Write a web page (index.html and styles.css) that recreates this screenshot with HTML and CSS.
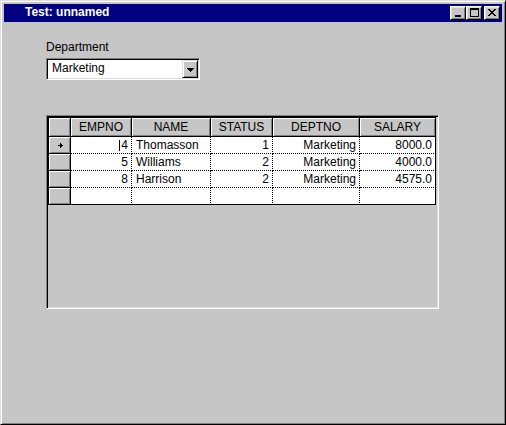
FILE: index.html
```html
<!DOCTYPE html>
<html>
<head>
<meta charset="utf-8">
<title>Test: unnamed</title>
<link rel="stylesheet" href="styles.css">
</head>
<body>
<div class="window">
  <div class="titlebar">
    <span class="title">Test: unnamed</span>
    <div class="caption-buttons">
      <span class="cap-btn cap-min"><svg width="6" height="2" viewBox="0 0 6 2" shape-rendering="crispEdges"><rect x="0" y="0" width="6" height="2" fill="#000"/></svg></span>
      <span class="cap-btn cap-max"><svg width="9" height="9" viewBox="0 0 9 9" shape-rendering="crispEdges"><rect x="0" y="0" width="9" height="2" fill="#000"/><rect x="0" y="0" width="1" height="9" fill="#000"/><rect x="8" y="0" width="1" height="9" fill="#000"/><rect x="0" y="8" width="9" height="1" fill="#000"/></svg></span>
      <span class="cap-btn cap-close"><svg width="8" height="7" viewBox="0 0 8 7" shape-rendering="crispEdges"><g fill="#000"><rect x="0" y="0" width="2" height="1"/><rect x="6" y="0" width="2" height="1"/><rect x="1" y="1" width="2" height="1"/><rect x="5" y="1" width="2" height="1"/><rect x="2" y="2" width="4" height="1"/><rect x="3" y="3" width="2" height="1"/><rect x="2" y="4" width="4" height="1"/><rect x="1" y="5" width="2" height="1"/><rect x="5" y="5" width="2" height="1"/><rect x="0" y="6" width="2" height="1"/><rect x="6" y="6" width="2" height="1"/></g></svg></span>
    </div>
  </div>
  <div class="client">
    <div class="field-label">Department</div>
    <div class="combo">
      <span class="combo-text">Marketing</span>
      <span class="combo-btn"><svg width="7" height="4" viewBox="0 0 7 4" shape-rendering="crispEdges"><g fill="#000"><rect x="0" y="0" width="7" height="1"/><rect x="1" y="1" width="5" height="1"/><rect x="2" y="2" width="3" height="1"/><rect x="3" y="3" width="1" height="1"/></g></svg></span>
    </div>
    <div class="grid-box">
      <div class="grid">
        <div class="hd"></div>
        <div class="hd">EMPNO</div>
        <div class="hd">NAME</div>
        <div class="hd">STATUS</div>
        <div class="hd">DEPTNO</div>
        <div class="hd">SALARY</div>

        <div class="ind"><svg width="5" height="5" viewBox="0 0 5 5" shape-rendering="crispEdges"><g fill="#000"><rect x="2" y="0" width="1" height="1"/><rect x="2" y="1" width="2" height="1"/><rect x="0" y="2" width="5" height="1"/><rect x="2" y="3" width="2" height="1"/><rect x="2" y="4" width="1" height="1"/></g></svg></div>
        <div class="cell num"><span class="caret"></span>4</div>
        <div class="cell">Thomasson</div>
        <div class="cell num">1</div>
        <div class="cell num">Marketing</div>
        <div class="cell num last-col">8000.0</div>

        <div class="ind"></div>
        <div class="cell num">5</div>
        <div class="cell">Williams</div>
        <div class="cell num">2</div>
        <div class="cell num">Marketing</div>
        <div class="cell num last-col">4000.0</div>

        <div class="ind"></div>
        <div class="cell num">8</div>
        <div class="cell">Harrison</div>
        <div class="cell num">2</div>
        <div class="cell num">Marketing</div>
        <div class="cell num last-col">4575.0</div>

        <div class="ind"></div>
        <div class="cell last-row"></div>
        <div class="cell last-row"></div>
        <div class="cell last-row"></div>
        <div class="cell last-row"></div>
        <div class="cell last-row last-col"></div>
      </div>
    </div>
  </div>
</div>
</body>
</html>
```
FILE: styles.css
```css
html, body {
  margin: 0;
  padding: 0;
  background: #c6c6c6;
}
body {
  font-family: "Liberation Sans", Arial, sans-serif;
  font-size: 12px;
  color: #000;
}
.window {
  width: 506px;
  height: 425px;
  box-sizing: border-box;
  background: #c6c6c6;
  border: 1px solid;
  border-color: #dfdfdf #000 #000 #dfdfdf;
  box-shadow: inset 1px 1px #fff, inset -1px -1px #808080;
  padding: 3px;
  display: flex;
  flex-direction: column;
}
.titlebar {
  height: 18px;
  background: #000080;
  color: #fff;
  display: flex;
  align-items: flex-start;
  padding: 0 2px 0 21px;
}
.title {
  flex: 1;
  font-weight: bold;
  font-size: 12px;
  line-height: 17px;
  white-space: nowrap;
}
.caption-buttons {
  display: flex;
  margin-top: 2px;
}
.cap-btn {
  width: 16px;
  height: 14px;
  box-sizing: border-box;
  background: #c6c6c6;
  border: 1px solid;
  border-color: #fff #000 #000 #fff;
  box-shadow: inset 1px 1px #dfdfdf, inset -1px -1px #808080;
  display: flex;
  justify-content: center;
  align-items: center;
}
.cap-btn svg {
  display: block;
}
.cap-min {
  justify-content: flex-start;
  align-items: flex-end;
  padding: 0 0 2px 4px;
}
.cap-max {
  padding: 0 0 1px 1px;
}
.cap-close {
  margin-left: 2px;
  padding: 0 1px 1px 0;
}
.client {
  padding: 18px 0 0 42px;
}
.field-label {
  line-height: 14px;
  height: 14px;
}
.combo {
  margin-top: 4px;
  width: 154px;
  height: 22px;
  box-sizing: border-box;
  background: #fff;
  border: 1px solid;
  border-color: #808080 #fff #fff #808080;
  box-shadow: inset 1px 1px #000, inset -1px -1px #dfdfdf;
  padding: 1px;
  display: flex;
}
.combo-text {
  flex: 1;
  padding-left: 4px;
  line-height: 16px;
}
.combo-btn {
  width: 16px;
  height: 18px;
  box-sizing: border-box;
  background: #c6c6c6;
  border: 1px solid;
  border-color: #dfdfdf #000 #000 #dfdfdf;
  box-shadow: inset 1px 1px #fff, inset -1px -1px #808080;
  display: flex;
  justify-content: center;
  align-items: center;
  padding-top: 1px;
}
.combo-btn svg {
  display: block;
}
.grid-box {
  margin-top: 35px;
  width: 393px;
  height: 194px;
  box-sizing: border-box;
  border: 1px solid;
  border-color: #808080 #fff #fff #808080;
  box-shadow: inset 1px 1px #000, inset -1px -1px #dfdfdf;
  padding: 1px;
}
.grid {
  display: grid;
  grid-template-columns: 22px 61px 79px 62px 87px 76px;
  grid-auto-rows: 17px;
  grid-template-rows: 19px;
  width: max-content;
  border-top: 1px solid #000;
  border-left: 1px solid #000;
}
.hd {
  box-sizing: border-box;
  background: #c6c6c6;
  border-right: 1px solid #000;
  border-bottom: 1px solid #000;
  box-shadow: inset 1px 1px #fff, inset -1px -1px #808080;
  text-align: center;
  line-height: 16px;
  padding-top: 1px;
  white-space: nowrap;
}
.ind {
  box-sizing: border-box;
  background: #c6c6c6;
  border-right: 1px solid #000;
  border-bottom: 1px solid #000;
  box-shadow: inset 1px 1px #fff, inset -1px -1px #808080;
  display: flex;
  justify-content: center;
  align-items: center;
  padding-left: 2px;
}
.ind svg {
  display: block;
}
.cell {
  box-sizing: border-box;
  background: #fff;
  border-right: 1px dotted #000;
  border-bottom: 1px dotted #000;
  line-height: 16px;
  padding: 0 3px 0 4px;
  white-space: nowrap;
  overflow: hidden;
}
.num {
  text-align: right;
}
.last-col {
  border-right: 1px solid #000;
}
.last-row {
  border-bottom: 1px solid #000;
}
.caret {
  display: inline-block;
  width: 1px;
  height: 11px;
  background: #000;
  vertical-align: -2px;
  margin-right: 1px;
}
```
